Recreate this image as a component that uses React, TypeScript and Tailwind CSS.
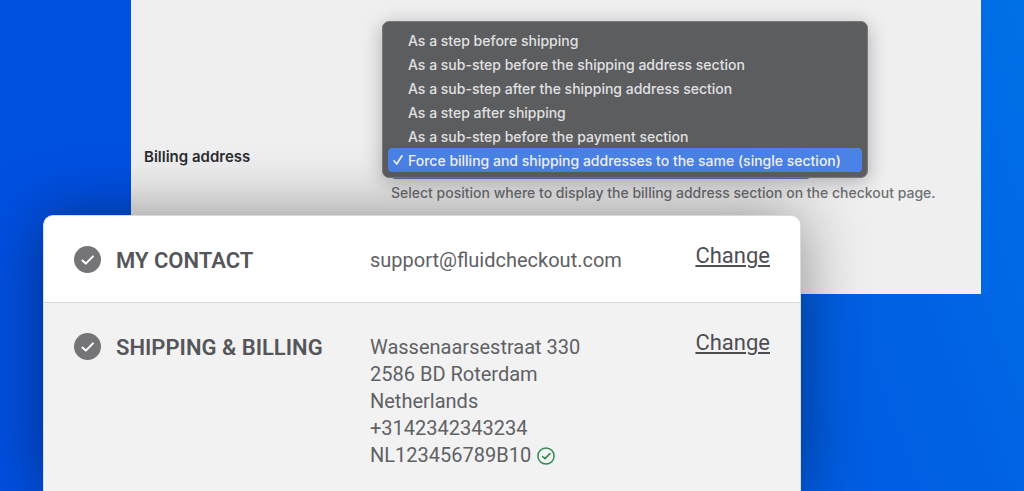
const positions = [
  'As a step before shipping',
  'As a sub-step before the shipping address section',
  'As a sub-step after the shipping address section',
  'As a step after shipping',
  'As a sub-step before the payment section',
  'Force billing and shipping addresses to the same (single section)',
];
const selected = positions[5];

function StepCheck() {
  return (
    <svg viewBox="0 0 27 27" className="size-[27px] shrink-0" aria-hidden="true">
      <circle cx="13.5" cy="13.5" r="13.5" fill="#757577" />
      <path d="M8.4 14.6 11.8 17.6 19 10.4" fill="none" stroke="#fff" strokeWidth="2" strokeLinecap="round" strokeLinejoin="round" />
    </svg>
  );
}

function ValidCheck() {
  return (
    <svg viewBox="0 0 18 18" className="size-[18px] shrink-0" role="img" aria-label="Valid">
      <circle cx="9" cy="9" r="8.1" fill="none" stroke="#2f8a4c" strokeWidth="1.5" />
      <path d="M5.5 9.5 8 11.6 12.9 6.6" fill="none" stroke="#2f8a4c" strokeWidth="1.6" strokeLinecap="round" strokeLinejoin="round" />
    </svg>
  );
}

function PositionMenu() {
  return (
    <div
      role="listbox"
      aria-label="Billing address position"
      className="absolute bottom-px -left-[9px] w-[486px] rounded-[7px] border border-[#77797b] bg-[#5c5d5f] px-[5px] pt-1.5 pb-[5px] shadow-[0_4px_20px_rgba(0,0,30,0.28)]"
    >
      {positions.map((p) => (
        <button
          key={p}
          type="button"
          role="option"
          aria-selected={p === selected}
          className="flex h-6 w-full items-center rounded-[4px] pl-1 text-left text-[14px] font-medium whitespace-nowrap text-[#e0e0e2] aria-selected:bg-[#4a82e6] aria-selected:text-[#f4f2ee]"
        >
          <span className="w-4 shrink-0">
            {p === selected && (
              <svg viewBox="0 0 12 12" className="size-3" aria-hidden="true">
                <path d="M2 6.8 4.7 10 10 1.8" fill="none" stroke="#f4f2ee" strokeWidth="1.7" strokeLinecap="round" strokeLinejoin="round" />
              </svg>
            )}
          </span>
          {p}
        </button>
      ))}
    </div>
  );
}

function Step({ title, lines, valid, className }: { title: string; lines: string[]; valid?: boolean; className: string }) {
  return (
    <section className={`flex items-start px-[30px] pt-[30px] ${className}`}>
      <StepCheck />
      <h2 className="mt-px ml-[15px] w-[254px] shrink-0 text-[22px] leading-[27px] font-semibold whitespace-nowrap text-[#55565a]">{title}</h2>
      <div className="mt-px flex-1 pb-7 text-[20px] leading-[27px] text-[#606165]">
        {lines.map((line, i) => (
          <p key={line} className="flex items-center gap-1.5">
            {line}
            {valid && i === lines.length - 1 && <ValidCheck />}
          </p>
        ))}
      </div>
      <a href="#" className="-mt-1 text-[22px] leading-[27px] text-[#4d4e52] underline decoration-2 underline-offset-2">
        Change
      </a>
    </section>
  );
}

export default function App() {
  return (
    <div className="flex min-h-screen flex-col overflow-hidden bg-[linear-gradient(70deg,#0050e2_0%,#0050e2_30%,#0060e2_80%,#0070e8_100%)]">
      <main className="mr-[43px] ml-[131px] flex items-start bg-[#efefef] pt-[149px] pb-[91px] pl-[13px] font-[Inter,sans-serif]">
        <label htmlFor="position" className="w-[247px] shrink-0 text-[15px] leading-4 font-semibold text-[#2b2c30]">
          Billing address
        </label>
        <div className="min-w-0">
          <div className="relative">
            <select id="position" defaultValue={selected} className="block h-[30px] w-[420px] rounded-[4px] border border-[#5c7fb8] bg-white px-2 text-[14px]">
              {positions.map((p) => (
                <option key={p}>{p}</option>
              ))}
            </select>
            <PositionMenu />
          </div>
          <p className="mt-1 text-[14px] leading-5 font-medium whitespace-nowrap text-[#707175]">
            Select position where to display the billing address section on the checkout page.
          </p>
        </div>
      </main>
      <div className="relative -mt-[79px] mr-[223px] ml-[43px] flex flex-1 flex-col overflow-hidden rounded-t-[10px] border border-b-0 border-[#d9dadc] bg-[#f2f2f2] font-[Roboto,sans-serif] shadow-[0_0_64px_rgba(0,0,0,0.42)]">
        <Step title="MY CONTACT" lines={['support@fluidcheckout.com']} className="bg-white" />
        <Step
          title="SHIPPING & BILLING"
          lines={['Wassenaarsestraat 330', '2586 BD Roterdam', 'Netherlands', '+3142342343234', 'NL123456789B10']}
          valid
          className="border-t border-[#d5d5d5]"
        />
      </div>
    </div>
  );
}
